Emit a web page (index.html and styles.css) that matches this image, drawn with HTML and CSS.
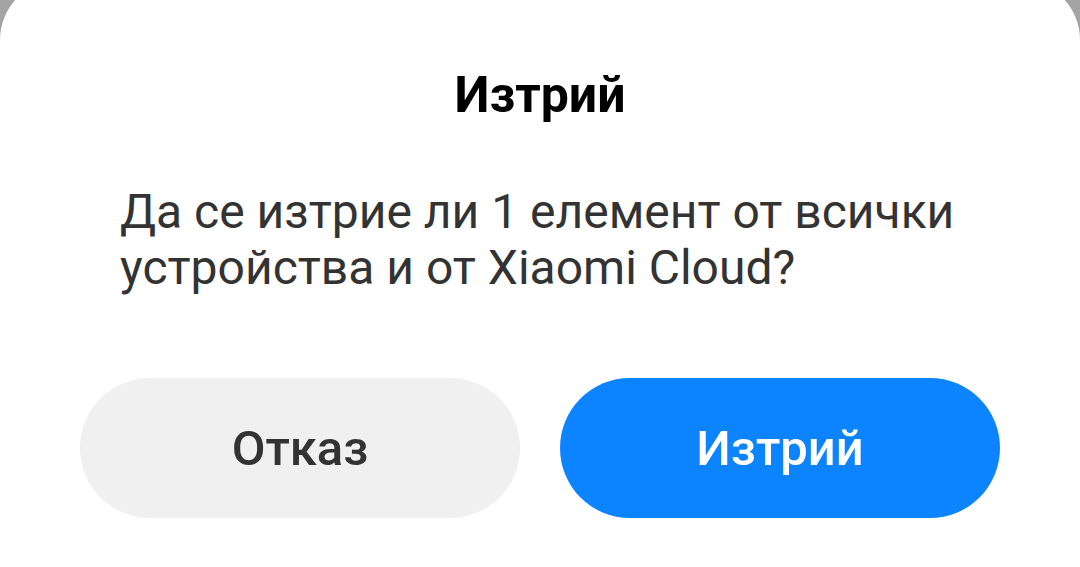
FILE: index.html
```html
<html>
<head>
    <meta charset="utf-8">
    <link rel="stylesheet" href="styles.css">
</head>
<body>
    <div class="dialog">
        <div class="title">Изтрий</div>
        <div class="message">Да се изтрие ли 1 елемент от всички устройства и от Xiaomi Cloud?</div>
        <div class="actions">
            <div class="btn btn-cancel">Отказ</div>
            <div class="btn btn-delete">Изтрий</div>
        </div>
    </div>
</body>
</html>
```

FILE: styles.css
```css
body {
    margin: 0;
    height: 100vh;
    overflow: hidden;
    background-color: #a4a4a4;
    font-family: Roboto, "Noto Sans", sans-serif;
}
.dialog {
    box-sizing: border-box;
    margin-top: -20px;
    height: 587px;
    background-color: #ffffff;
    border-radius: 60px 60px 0 0;
    padding: 85px 80px 0 80px;
}
.title {
    font-size: 50px;
    line-height: 60px;
    font-weight: bold;
    color: #000000;
    text-align: center;
}
.message {
    margin-top: 59px;
    padding: 0 40px;
    font-size: 48px;
    line-height: 56px;
    color: #333333;
}
.actions {
    display: flex;
    gap: 40px;
    margin-top: 82px;
}
.btn {
    flex: 1;
    height: 140px;
    border-radius: 70px;
    display: flex;
    align-items: center;
    justify-content: center;
    font-size: 49px;
    font-weight: 500;
}
.btn-cancel {
    background-color: #f0f0f0;
    color: #333333;
}
.btn-delete {
    background-color: #0d84ff;
    color: #ffffff;
}
```
